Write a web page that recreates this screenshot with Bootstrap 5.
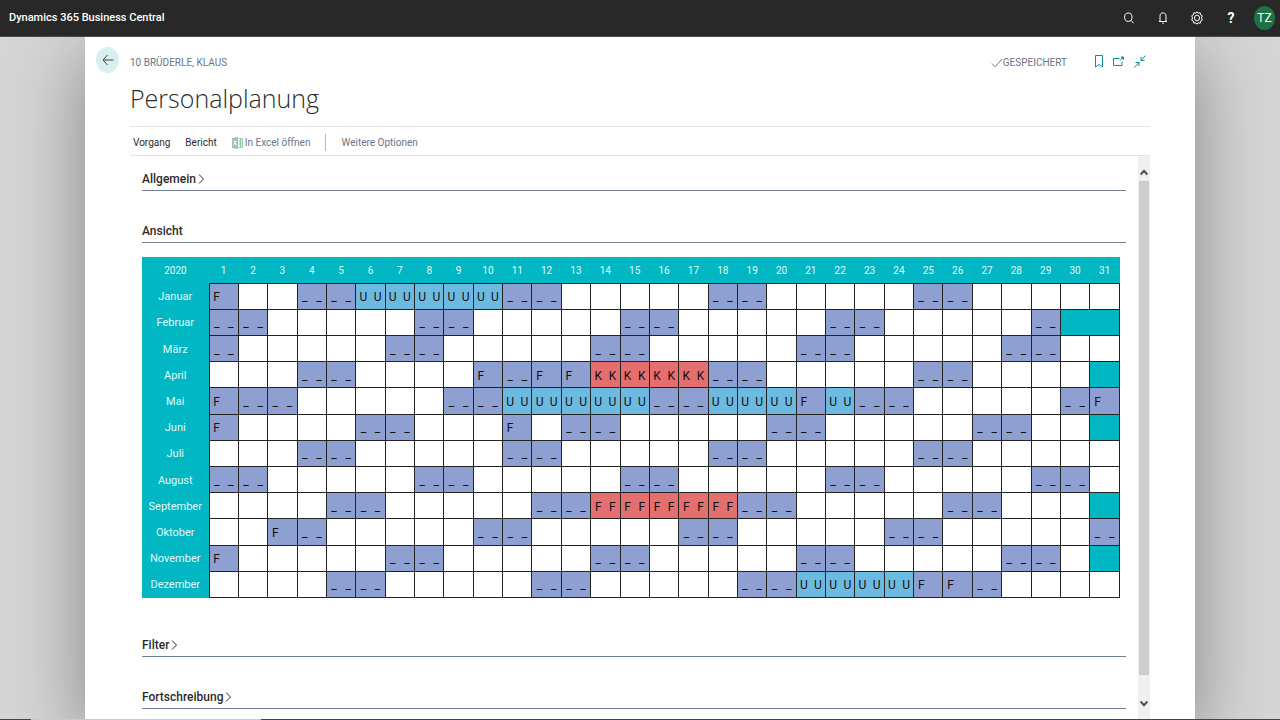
<!DOCTYPE html>
<html lang="de">
<head>
<meta charset="utf-8">
<meta name="viewport" content="width=device-width, initial-scale=1">
<title>Personalplanung - Dynamics 365 Business Central</title>
<link rel="stylesheet" href="https://cdn.jsdelivr.net/npm/bootstrap@5.3.0/dist/css/bootstrap.min.css">
<style>
  :root { --ink: #2b2b2b; --slate: #6b7488; --teal: #00b7c3; --teal-dark: #128c95; }
  body { font-family: Roboto, "Open Sans", sans-serif; font-size: 10px; line-height: 16px; color: var(--ink); background: #d5d5d5; }
  button { background: none; border: 0; padding: 0; color: inherit; text-align: left; }
  svg { display: block; flex: none; fill: none; stroke: currentColor; }
  .topbar { height: 37px; background: #282828; border-bottom: 1px solid #4a4a4a; z-index: 2; padding: 0 5px 0 9px; flex: none; }
  .brand-name { font-size: 11px; font-weight: 500; }
  .top-icons { gap: 18px; }
  .top-icons button { width: 16px; display: flex; justify-content: center; }
  .top-icons .help-mark { font-size: 14px; font-weight: 700; }
  .top-icons .avatar { width: 21px; height: 24px; border-radius: 50%; background: #1f7244; font-size: 12px; align-items: center; margin-left: -3px; }
  .sheet { width: 100%; max-width: 1110px; background: #fff; padding: 0 45px; box-shadow: 0 20px 70px rgba(0,0,0,.38); min-height: 0; }
  .head-row { padding-top: 10px; height: 38px; margin-left: -34px; }
  .back-btn { width: 23px; height: 26px; border-radius: 50%; background: #d8eff1; color: #444; display: flex; align-items: center; justify-content: center; }
  .crumb, .saved { color: var(--slate); line-height: 32px; }
  .crumb { padding-left: 11px; }
  .page-tools { color: var(--teal-dark); gap: 10px; height: 29px; margin: 0 4px 0 28px; }
  .page-title { font-family: "Open Sans", sans-serif; font-size: 25px; line-height: 40px; font-weight: 300; margin: 3px 0 8px; }
  .actions { border-top: 1px solid #e1e1e1; border-bottom: 1px solid #e1e1e1; height: 30px; padding: 3px 0 0 3px; gap: 15px; flex: none; }
  .soft { color: var(--slate); }
  .excel-btn { gap: 2px; }
  .divider { width: 1px; height: 17px; background: #b5bac3; }
  .pane-row { min-height: 0; }
  .scroll-pane { min-width: 0; overflow: hidden; padding: 12px 12px 0; }
  .group-head { font-size: 12px; line-height: 22px; font-weight: 500; border-bottom: 1px solid #75809a; margin: 0; }
  .group-head button { display: flex; align-items: center; gap: 2px; width: 100%; font-weight: 500; }
  .group-gap { margin-bottom: 29px; }
  .plan { width: calc(100% - 6px); height: 341px; table-layout: fixed; border-collapse: collapse; font-size: 11px; margin: 14px 0 36px; }
  .plan th { background: var(--teal); color: #e2f8f9; font-weight: 400; text-align: center; padding: 2px 0 0; height: 26px; }
  .plan thead th { font-size: 10px; }
  .plan .month-col { width: 67px; }
  .plan td { border: 1px solid #222; padding: 2px 0 0; }
  .plan td i { display: inline-block; width: 50%; text-align: center; font-style: normal; font-size: 12px; color: #111; vertical-align: middle; }
  .plan td.off { background: #8e9fd2; }
  .plan td.leave { background: #6dbae1; }
  .plan td.sick { background: #e56e6e; }
  .plan td.none { background: var(--teal); }
  .rail { width: 12px; background: #f0f0f0; flex: none; }
  .rail button { height: 25px; display: flex; align-items: end; justify-content: center; color: #505050; padding-bottom: 5px; }
  .rail .rail-down { height: 44px; padding-bottom: 12px; }
  .rail-thumb { background: #cdcdcd; margin: 0 1px; }
  .bottom-line { height: 1px; flex: none; background: #444; z-index: 2; }
  .bottom-line span { width: 18%; margin-left: 31px; background: #c9c9c9; }
</style>
</head>
<body>
<div class="vh-100 d-flex flex-column overflow-hidden">
  <header class="topbar position-relative d-flex align-items-center justify-content-between text-white">
    <span class="brand-name">Dynamics 365 Business Central</span>
    <div class="top-icons d-flex align-items-center">
      <button aria-label="Suchen"><svg width="12" height="12" viewBox="0 0 12 12"><ellipse cx="5.3" cy="5.2" rx="3.7" ry="4.2"/><path d="M8 8.3l2.6 3"/></svg></button>
      <button aria-label="Benachrichtigungen"><svg width="10" height="12" viewBox="0 0 10 12"><path d="M1 9.500h8M2 9V4.200C2 2 3.200.9 5 .9s3 1.100 3 3.300V9M4 10.700c.5.7 1.500.7 2 0"/></svg></button>
      <button aria-label="Einstellungen"><svg width="12" height="14" viewBox="0 0 12 14"><path d="M6 .8l1.200 1.400 2-.4.4 2 1.700 1-.8 2.200.8 2.200-1.700 1-.4 2-2-.4L6 13.200l-1.200-1.400-2 .4-.4-2-1.700-1L1.500 7 .7 4.800l1.700-1 .4-2 2 .4z"/><ellipse cx="6" cy="7" rx="2.500" ry="2.900"/></svg></button>
      <button class="help-mark" aria-label="Hilfe">?</button>
      <button class="avatar">TZ</button>
    </div>
  </header>

  <main class="sheet flex-grow-1 mx-auto d-flex flex-column">
    <div class="head-row d-flex align-items-start flex-shrink-0">
      <button class="back-btn" aria-label="Zurück"><svg width="12" height="12" viewBox="0 0 12 12" stroke-width="1"><path d="M11.500 6H1M5.500 1L1 6l4.500 5"/></svg></button>
      <span class="crumb flex-grow-1">10 BRÜDERLE, KLAUS</span>
      <span class="saved d-flex align-items-center"><svg width="12" height="10" viewBox="0 0 12 10"><path d="M1 5.500l3.200 3.300L11 1"/></svg>GESPEICHERT</span>
      <div class="d-flex align-items-center page-tools">
        <button aria-label="Lesezeichen"><svg width="8" height="13" viewBox="0 0 8 13"><path d="M.5.5h7v11.500L4 9.500.5 12z"/></svg></button>
        <button aria-label="In neuem Fenster öffnen"><svg width="11" height="11" viewBox="0 0 11 11"><path d="M6.500 2.500h-6v7h8.500V5.500M7 4.500L10 1.500"/><path d="M8 1h2.500v2.500z" fill="currentColor"/></svg></button>
        <button aria-label="Ansicht verkleinern"><svg width="12" height="13" viewBox="0 0 12 13"><path d="M11.500.5L7 5.500M7 2v3.500h3.500M.5 12.500L5 7.500M1.500 7.500H5V11"/></svg></button>
      </div>
    </div>
    <h1 class="page-title">Personalplanung</h1>

    <nav class="actions d-flex align-items-center" aria-label="Aktionen">
      <button>Vorgang</button>
      <button>Bericht</button>
      <button class="soft d-flex align-items-center excel-btn"><svg width="11" height="12" viewBox="0 0 11 12"><path d="M0 1l6-1v12l-6-1z" fill="#9cc5ae" stroke="none"/><path d="M6.500 1.500h4v9h-4M6.500 4h4M6.500 6h4M6.500 8h4M8.500 2v8" stroke="#9cc5ae"/><path d="M1.600 3.800l2.800 4.400M4.400 3.800L1.600 8.200" stroke="#fff"/></svg>In Excel öffnen</button>
      <span class="divider"></span>
      <button class="soft">Weitere Optionen</button>
    </nav>

    <div class="pane-row d-flex flex-grow-1">
      <div class="scroll-pane flex-grow-1">
        <h2 class="group-head group-gap"><button aria-expanded="false">Allgemein<svg width="7" height="10" viewBox="0 0 7 10" stroke="#777"><path d="M1 .5L5.500 5 1 9.500"/></svg></button></h2>
        <h2 class="group-head"><button aria-expanded="true">Ansicht</button></h2>
        <table class="plan">
          <thead><tr id="days"><th class="month-col" scope="col">2020</th></tr></thead>
          <tbody id="months"></tbody>
        </table>
        <h2 class="group-head group-gap"><button aria-expanded="false">Filter<svg width="7" height="10" viewBox="0 0 7 10" stroke="#777"><path d="M1 .5L5.500 5 1 9.500"/></svg></button></h2>
        <h2 class="group-head"><button aria-expanded="false">Fortschreibung<svg width="7" height="10" viewBox="0 0 7 10" stroke="#777"><path d="M1 .5L5.500 5 1 9.500"/></svg></button></h2>
      </div>
      <div class="rail d-flex flex-column">
        <button aria-label="Nach oben"><svg width="8" height="7" viewBox="0 0 8 7" stroke-width="2"><path d="M.7 5.500L4 1.800l3.300 3.700"/></svg></button>
        <div class="rail-thumb flex-grow-1"></div>
        <button class="rail-down" aria-label="Nach unten"><svg width="8" height="7" viewBox="0 0 8 7" stroke-width="2"><path d="M.7 1.500L4 5.200l3.300-3.700"/></svg></button>
      </div>
    </div>
  </main>
  <div class="bottom-line position-relative d-flex"><span></span></div>
</div>

<script>
  // One character per day: . free, w weekend, H public holiday, U leave, K sick, R absent, x no such day
  const plan = {
    Januar:    "H..wwUUUUUww.....ww.....ww.....",
    Februar:   "ww.....ww.....ww.....ww.....wxx",
    "März":    "w.....ww.....ww.....ww.....ww..",
    April:     "...ww....HwHHKKKKww.....ww....x",
    Mai:       "Hww.....wwUUUUUwwUUUHUww.....wH",
    Juni:      "H....ww...H.ww.....ww.....ww..x",
    Juli:      "...ww.....ww.....ww.....ww.....",
    August:    "ww.....ww.....ww.....ww.....ww.",
    September: "....ww.....wwRRRRRww.....ww...x",
    Oktober:   "..Hw.....ww.....ww.....ww.....w",
    November:  "H.....ww.....ww.....ww.....ww.x",
    Dezember:  "....ww.....ww.....wwUUUUHHw...."
  };
  const kinds = { ".": ["", ""], w: ["off", "__"], H: ["off", "F "], U: ["leave", "UU"], K: ["sick", "KK"], R: ["sick", "FF"], x: ["none", ""] };
  const days = document.getElementById("days");
  for (let d = 1; d <= 31; d++) days.insertAdjacentHTML("beforeend", `<th scope="col">${d}</th>`);
  document.getElementById("months").innerHTML = Object.entries(plan).map(([month, marks]) =>
    `<tr><th scope="row">${month}</th>` + marks.replace("xx", "X").split("").map(m => {
      const [cls, text] = kinds[m === "X" ? "x" : m];
      return `<td class="${cls}"${m === "X" ? ' colspan="2"' : ""}>${[...text].map(c => `<i>${c}</i>`).join("")}</td>`;
    }).join("") + "</tr>").join("");
</script>
<script src="https://cdn.jsdelivr.net/npm/bootstrap@5.3.0/dist/js/bootstrap.bundle.min.js"></script>
</body>
</html>
